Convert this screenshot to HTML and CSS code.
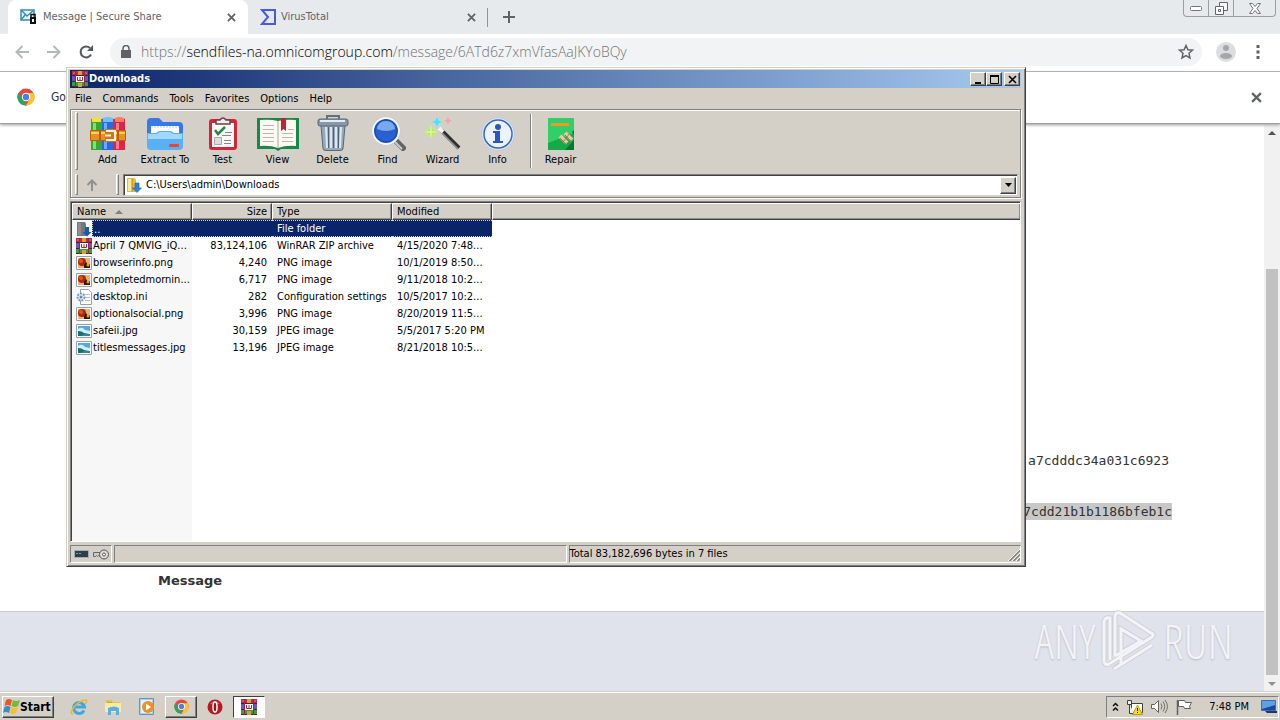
FILE: index.html
```html
<!DOCTYPE html>
<html>
	<head>
		<meta charset="UTF-8">
		<title>Downloads</title>
		<link rel="stylesheet" href="styles.css">
	</head>
	<body>
		<!-- shared icons -->
		<svg class="defs" width="0" height="0">
			<symbol id="rar" viewBox="0 0 16 16">
				<path fill="#c02848" d="M0 0h16v5H0z"/><path fill="#3868c8" d="M0 5h16v6H0z"/><path fill="#3c9c3c" d="M0 11h16v5H0z"/>
				<path fill="#5c1838" d="M0 4h16v1H0zM0 10h16v1H0zM0 15h16v1H0z"/>
				<path fill="#e84860" d="M1 1h3v2H1zM12 1h3v2h-3z"/><path fill="#7a50b8" d="M0 6h3v3H0zM13 6h3v3h-3z"/>
				<path fill="#d8a030" d="M6 0h4v4H6zM6 12h4v4H6z"/><path fill="#902848" d="M3 0h1v16H3zM12 0h1v16h-1z"/>
				<path fill="#fff" d="M4 5h8v6H4z"/><path fill="none" stroke="#a02840" d="M5.500 6v3.500h5V6M8 6v3"/>
			</symbol>
			<symbol id="png" viewBox="0 0 16 16">
				<path fill="#fff" stroke="#98a0a8" d="M.5 1.500h15v13H.5z"/><path fill="#f0b070" d="M2 3h12v10H2z"/>
				<circle cx="6" cy="7" r="4" fill="#a82810"/><circle cx="5" cy="6" r="2" fill="#e05818"/><path fill="#301808" d="M8 10l2-3 2 3 2-1v4H8z"/><circle cx="12" cy="10" r="1.500" fill="#e8a020"/>
			</symbol>
			<symbol id="jpg" viewBox="0 0 16 16">
				<path fill="#fff" stroke="#98a0a8" d="M.5 1.500h15v13H.5z"/><path fill="#58a8e0" d="M2 3h12v6H2z"/><path fill="#d0f0f8" d="M2 6q4-3 7 1l5 1v2H2z"/><path fill="#187068" d="M2 8q4 0 6 2l6 1v2H2z"/><path fill="#2888b0" d="M8 11h6v2H5z"/>
			</symbol>
			<symbol id="chrome" viewBox="0 0 18 18">
				<circle cx="9" cy="9" r="8.500" fill="#e8483c"/><path fill="#2ca45c" d="M1.600 4.700L7 13l3 4.500A8.500 8.500 0 0 1 1.600 4.700z"/>
				<path fill="#fcc820" d="M9 5h7.500A8.500 8.500 0 0 1 9 17.500l4-7z"/><circle cx="9" cy="9" r="4.200" fill="#fff"/><circle cx="9" cy="9" r="3.200" fill="#4880e8"/>
			</symbol>
			<symbol id="cross" viewBox="0 0 10 10"><path fill="none" stroke="#5f6368" stroke-width="2" d="M1 1l8 8M9 1l-8 8"/></symbol>
			<symbol id="dir" viewBox="0 0 16 16">
				<path fill="#e8b840" d="M1 1h8l1 2v12H1z"/><path fill="#fae8a0" d="M2 2h3v12H2z"/><path fill="#d49c28" d="M6 2h1v13H6z"/><path fill="#2888d8" stroke="#1860a8" stroke-width=".6" d="M9 6h4v5h2.500L11 15.500 6.500 11H9z"/>
			</symbol>
		</svg>

		<div class="desktop">
			<div class="browser">
				<div class="tabs">
					<div class="tab active">
						<svg width="18" height="16" viewBox="0 0 18 16"><path fill="#e8f6fc" stroke="#3a8cb0" stroke-width="1.500" d="M1 1h13v10H1z"/><path fill="none" stroke="#3a8cb0" stroke-width="1.500" d="M1 1l6 6 7-6M1 11l4-5"/><path fill="#111" d="M10 8h6v7h-6z"/><path fill="none" stroke="#111" stroke-width="1.500" d="M11 8V5.500h4V8"/><path fill="#fff" d="M12 10h2v3h-2z"/></svg>
						<span class="name">Message | Secure Share</span>
						<button class="plain" aria-label="Close tab"><svg width="9" height="9"><use href="#cross"/></svg></button>
					</div>
					<div class="tab">
						<svg width="16" height="16" viewBox="0 0 16 16"><path fill="none" stroke="#4a58e8" stroke-width="2" d="M2 1h13v14H2l6-7z"/></svg>
						<span class="name">VirusTotal</span>
						<button class="plain" aria-label="Close tab"><svg width="9" height="9"><use href="#cross"/></svg></button>
					</div>
					<button class="plain newTab" aria-label="New tab"><svg width="12" height="12"><path stroke="#5f6368" stroke-width="2" d="M6 0v12M0 6h12"/></svg></button>
					<div class="winBtns">
						<button aria-label="Minimize"><svg width="13" height="5"><rect x=".5" y=".5" width="11" height="4" rx="1" fill="#fff" stroke="#707580"/></svg></button>
						<button aria-label="Restore"><svg width="13" height="13"><path fill="#f4f5f7" stroke="#606570" d="M4.500.500h8v8h-8z"/><path fill="#fff" stroke="#606570" d="M.5 4.500h8v8h-8zM3.500 7.500h2v2h-2z"/></svg></button>
						<button class="wide" aria-label="Close"><svg width="12" height="11"><path fill="#fff" stroke="#707580" d="M.5.500h3l2.500 3 2.500-3h3L8 5.500l3.500 5h-3L6 7.500l-2.500 3h-3l3.500-5z"/></svg></button>
					</div>
				</div>
				<div class="bar">
					<button class="plain nav" aria-label="Back"><svg width="14" height="14"><path fill="none" stroke="#b6b8bb" stroke-width="2" d="M14 7H2M7.500 1L1.500 7l6 6"/></svg></button>
					<button class="plain nav" aria-label="Forward"><svg width="14" height="14"><path fill="none" stroke="#b6b8bb" stroke-width="2" d="M0 7h12M6.500 1l6 6-6 6"/></svg></button>
					<button class="plain nav" aria-label="Reload"><svg width="14" height="14"><path fill="none" stroke="#55585d" stroke-width="2" d="M12 9.500A5.500 5.500 0 1 1 11 3"/><path fill="#55585d" d="M14 0v6H8z"/></svg></button>
					<div class="omnibox">
						<svg width="10" height="13"><path fill="#5f6368" d="M0 5h10v8H0z"/><path fill="none" stroke="#5f6368" stroke-width="1.500" d="M2 5V3.500a3 3 0 0 1 6 0V5"/></svg>
						<div class="url">https://<b>sendfiles-na.omnicomgroup.com</b>/message/6ATd6z7xmVfasAaJKYoBQy</div>
						<button class="plain" aria-label="Bookmark"><svg width="16" height="16" viewBox="0 0 16 16"><path fill="none" stroke="#5f6368" stroke-width="1.500" d="M8 1.500l1.900 4.300 4.600.4-3.500 3.100 1 4.600L8 11.500l-4 2.400 1-4.600-3.500-3.100 4.600-.4z"/></svg></button>
					</div>
					<svg class="avatar" width="20" height="20"><circle cx="10" cy="10" r="10" fill="#dcdddf"/><circle cx="10" cy="6" r="3" fill="#a4a6a9"/><ellipse cx="10" cy="14" rx="6" ry="3" fill="#a4a6a9"/></svg>
					<button class="plain dots" aria-label="Menu"><svg width="4" height="14"><path fill="#5f6368" d="M.5 0h3v3h-3zM.5 5.500h3v3h-3zM.5 11h3v3h-3z"/></svg></button>
				</div>
				<div class="infobar">
					<svg width="18" height="18"><use href="#chrome"/></svg>
					<span>Go</span>
					<button class="plain" aria-label="Dismiss"><svg width="11" height="11"><use href="#cross"/></svg></button>
				</div>
				<div class="view">
					<div class="page">
						<div class="content">
							<p class="hash">a7cdddc34a031c6923</p>
							<p class="hash"><mark>7cdd21b1b1186bfeb1c</mark></p>
							<h2>Message</h2>
						</div>
						<div class="foot">
							<div class="anyrun">
								<span>ANY</span>
								<svg width="56" height="62" viewBox="0 0 56 62"><path fill="none" stroke="#cdd0d8" stroke-width="5" d="M9 50V8q-5-1-6 4v38q0 6 5 4l43-27q3-3-1-4L19 3q-4-1-5 3v40M14 46l26-15L20 19v35q-5 2-7 5l38-24"/><path fill="none" stroke="#f3f4f7" stroke-width="3" d="M9 50V8q-5-1-6 4v38q0 6 5 4l43-27q3-3-1-4L19 3q-4-1-5 3v40M14 46l26-15L20 19v35M13 59l38-24"/></svg>
								<span>RUN</span>
							</div>
						</div>
					</div>
					<div class="scroll">
						<button class="plain" aria-label="Scroll up"><svg width="8" height="4"><path fill="#505050" d="M0 4l4-4 4 4z"/></svg></button>
						<div class="track"><div class="thumb"></div></div>
						<button class="plain" aria-label="Scroll down"><svg width="8" height="4"><path fill="#909090" d="M0 0h8L4 4z"/></svg></button>
					</div>
				</div>
			</div>

			<div class="taskbar">
				<button class="start"><svg width="17" height="17" viewBox="0 0 17 17"><path fill="#e85820" d="M3 2q3-2 6 0L7.500 8q-3-2-6 0z"/><path fill="#78b838" d="M10 2q3 2 7 0l-2 6q-3 2-6.500 0z"/><path fill="#3888d8" d="M1.500 9q3-2 6 0L6 15q-3-2-6 0z"/><path fill="#f8c020" d="M8.500 9q3 2 6.500 0l-2 6q-3 2-6 0z"/></svg>Start</button>
				<div class="quick">
					<button aria-label="Internet Explorer"><svg width="18" height="18" viewBox="0 0 18 18"><path fill="none" stroke="#40a8e0" stroke-width="3" d="M14 12.500A5.500 5.500 0 1 1 14.500 9H4"/><path fill="none" stroke="#e8b830" stroke-width="1.500" d="M3 16q-4 0 1-7 6-7 12-7 2 1-1 4"/></svg></button>
					<button aria-label="Explorer"><svg width="17" height="16" viewBox="0 0 17 16"><path fill="#e8c050" d="M1 1h6l1 2h7v6H1z"/><path fill="#fbeaa0" d="M0 4h16v9H0z"/><path fill="#80c058" d="M2 3h5v1H2z"/><path fill="#58b0e0" d="M3 9q6-3 11 0v7h-3v-4H6v4H3z"/></svg></button>
					<button aria-label="Media Player"><svg width="17" height="17" viewBox="0 0 17 17"><path fill="#a8d0f0" stroke="#5898d0" d="M.5.500h14v16H.5z"/><path fill="#e4f2fc" d="M2 2h11v13H2z"/><circle cx="9" cy="9" r="6" fill="#f09020"/><path fill="#fff" d="M7 5.500l5 3.500-5 3.500z"/></svg></button>
					<button class="raised" aria-label="Chrome"><svg width="15" height="15"><use href="#chrome"/></svg></button>
					<button aria-label="Opera"><svg width="16" height="16" viewBox="0 0 16 16"><circle cx="8" cy="8" r="7.500" fill="#b81820"/><path fill="#e05860" d="M3 5q5-6 10 0z"/><ellipse cx="8" cy="8" rx="2" ry="5" fill="#a01018" stroke="#fff" stroke-width="1.500"/></svg></button>
					<button class="pressed" aria-label="WinRAR"><svg width="16" height="16"><use href="#rar"/></svg></button>
				</div>
				<div class="tray">
					<svg width="7" height="10"><path fill="none" stroke="#111" stroke-width="1.500" d="M1 4l2.500-2.500L6 4M1 8.500L3.500 6 6 8.500"/></svg>
					<svg width="16" height="16"><path fill="#fff" stroke="#404040" d="M4.500 4.500h11v9h-11z"/><path fill="#eee" stroke="#404040" d="M.5 1.500h4v4h-4zM2.500 5.500v9h5"/><path fill="#f8d820" stroke="#a08000" stroke-width=".7" d="M10.500 6l5 9.500h-10z"/><path stroke="#222" d="M10.500 9v3M10.500 13v1"/></svg>
					<svg width="17" height="15"><path fill="#fff" stroke="#606060" d="M.5 5.500h3l4-4v12l-4-4h-3z"/><path fill="none" stroke="#707070" d="M10 4.500q2 3 0 6M12 2.500q3.500 5 0 10M14 1q5 6.500 0 13"/></svg>
					<svg width="17" height="16"><path stroke="#606060" stroke-width="1.500" d="M1.500 1v15"/><path fill="#fff" stroke="#606060" d="M2.500 1.500h6l1 2h6l-2 4 1 2h-6l-1-2h-5z"/></svg>
					<span class="clock">7:48 PM</span>
					<svg width="16" height="13"><path fill="#1848a0" stroke="#3870b8" d="M.5.500h14v10H.5z"/><path fill="#60a0e0" d="M1 1h13v4L1 9z"/><path fill="#203860" d="M4 11h12v2H6z"/></svg>
				</div>
			</div>

			<div class="window">
				<div class="title">
					<svg width="16" height="16"><use href="#rar"/></svg>
					<b>Downloads</b>
					<button aria-label="Minimize"><svg width="9" height="9"><path d="M1 7h6v2H1z"/></svg></button>
					<button aria-label="Maximize"><svg width="9" height="9"><path fill="none" stroke="#000" d="M.5 1v7.500h8V1"/><path d="M0 0h9v2H0z"/></svg></button>
					<button class="close" aria-label="Close"><svg width="9" height="9"><path stroke="#000" stroke-width="1.600" d="M1 1l7 7M8 1L1 8"/></svg></button>
				</div>
				<div class="menu">
					<button>File</button><button>Commands</button><button>Tools</button><button>Favorites</button><button>Options</button><button>Help</button>
				</div>
				<div class="bars">
					<div class="tools">
						<i class="grip"></i>
						<button><svg width="36" height="34" viewBox="0 0 36 34">
							<path fill="#38a830" d="M1 2q6-3 11 0v31H1z"/><path fill="#2868e0" d="M12 2q6-3 12 0v31H12z"/><path fill="#d82848" d="M24 2q6-3 11 0v31H24z"/>
							<path fill="#f0e040" d="M2 1q5-2 9 0v4H2z"/><path fill="#70c0ff" d="M13 1q5-2 10 0v4H13z"/><path fill="#ff8060" d="M25 1q5-2 9 0v4h-9z"/>
							<path fill="#80e070" d="M3 6h3v26H3z"/><path fill="#70a8ff" d="M14 6h3v26h-3z"/><path fill="#ff7890" d="M26 6h3v26h-3z"/>
							<path fill="#e89020" stroke="#b86010" d="M.5 13.500h35v10H.5z"/><path fill="#ffd060" d="M1 15h34v2H1z"/><path fill="#b86010" d="M9 13h2v11H9zM27 13h2v11h-2z"/><path fill="#c87820" d="M15 12h11v13H15z"/><path fill="none" stroke="#fff0d0" stroke-width="2" d="M16 14h9v9h-9M15 18.500h6"/></svg>Add</button>
						<button class="big"><svg width="38" height="34" viewBox="0 0 38 34">
							<path fill="#3878e8" d="M1 5q0-4 4-4h8l4 4h16q4 0 4 4v12H1z"/><path fill="#fff" d="M5 9h28v9H5z"/><path stroke="#b8c8d8" stroke-dasharray="2 1" d="M5 10h28"/>
							<path fill="#58b0f8" d="M1 16h9l3-2h12l3 2h9v13q0 4-4 4H5q-4 0-4-4z"/><path fill="#a0d8ff" d="M2 17h9l3-2h10l3 2h9v5H2z"/><rect x="23" y="27" width="10" height="3" rx="1" fill="#e04838"/></svg>Extract To</button>
						<button><svg width="30" height="34" viewBox="0 0 30 34">
							<rect x="1" y="2" width="28" height="31" rx="3" fill="#d02838"/><path fill="#f8f8f8" d="M4 6h22v24H4z"/><path fill="#eee" stroke="#704048" stroke-width="1.500" d="M8 3h4q3-4 6 0h4v4H8z"/>
							<path fill="none" stroke="#288840" stroke-width="2.500" d="M7 13l3 4 7-7"/><path fill="#ddd" stroke="#aaa" d="M6.500 20.500h7v7h-7z"/><path stroke="#888" d="M17 15.500h7M14 18.500h9M16 23.500h7M16 26.500h7"/></svg>Test</button>
						<button><svg width="42" height="34" viewBox="0 0 42 34">
							<path fill="#188848" d="M0 1h42v31H24l-3 2-3-2H0z"/><path fill="#fcfaf2" d="M3 3q10-1 18 1 8-2 18-1v26q-10-1-18 2-8-3-18-2z"/><path stroke="#b0a898" d="M21 4v27"/>
							<path stroke="#b8b8b0" stroke-width="1" d="M6 8.500h11M6 12.500h11M6 16.500h11M6 20.500h11M6 24.500h11M25 16.500h11M25 20.500h11M25 24.500h11M31 12.500h6"/><path fill="#c82030" d="M24 1h5v13l-2.500-2-2.500 2z"/></svg>View</button>
						<button><svg width="32" height="36" viewBox="0 0 32 36">
							<path fill="#98a8b8" stroke="#586878" d="M4 10.500h24l-2 23q0 2-3 2H9q-3 0-3-2z"/><path fill="#dce8f0" d="M8 12h2l1 21H9zM13 12h2v21h-2zM18 12h2v21h-2zM23 12h2l-1 21h-2z"/><path stroke="#506070" d="M11.500 12v21M16.500 12v21M21.500 12v21"/>
							<rect x="1" y="4" width="30" height="7" rx="2" fill="#8898a8" stroke="#586878"/><path fill="#e4ecf4" d="M3 5h25v2H3z"/><path fill="none" stroke="#607080" stroke-width="2" d="M10 4V1h12v3"/></svg>Delete</button>
						<button><svg width="36" height="36" viewBox="0 0 36 36">
							<path stroke="#606468" stroke-width="6" stroke-linecap="round" d="M25 25l8 8"/><path stroke="#c8ccd0" stroke-width="2" d="M24 26l8 8"/>
							<circle cx="16" cy="16" r="14" fill="#1858c8" stroke="#b8c8e0"/><circle cx="16" cy="16" r="13" fill="#2860d0" stroke="#f4f8ff" stroke-width="2"/><circle cx="16" cy="16" r="11" fill="none" stroke="#1848a8"/><path fill="#78a8f0" d="M7 14q1-8 9-8t9 8q-9 4-18 0z"/></svg>Find</button>
						<button><svg width="36" height="36" viewBox="0 0 36 36">
							<path stroke="#303030" stroke-width="4" d="M16 15l18 18"/><path stroke="#989898" stroke-width="1.500" d="M15 16l18 18"/><path stroke="#f0f0f0" stroke-width="4" d="M14 13l4 4"/>
							<circle cx="6" cy="17" r="5.500" fill="#c0f070" opacity=".6"/><circle cx="6" cy="17" r="3" fill="#a8f040"/><path fill="#d8f8a0" d="M6 10l1 6 6 1-6 1-1 6-1-6-6-1 6-1z"/><circle cx="12" cy="7" r="4" fill="#90f0f0" opacity=".6"/><path fill="#50e0f0" d="M12 2l1.500 3.500L17 7l-3.500 1.500L12 12l-1.500-3.500L7 7l3.500-1.500z"/><path fill="#f8a0a8" d="M23 2l1 2.500L27 6l-3 1-1 3-1-3-3-1 3-1.500z"/></svg>Wizard</button>
						<button><svg width="34" height="34" viewBox="0 0 34 34"><circle cx="17" cy="17" r="16.500" fill="#dce4f4" stroke="#c0c8dc"/><circle cx="17" cy="17" r="14" fill="#edf2ff" stroke="#3868b8" stroke-width="1.500"/><circle cx="17" cy="10" r="3" fill="#2858c0"/><path fill="#2858c0" d="M12 14h7v10h3v2H12v-2h2v-8h-2z"/></svg>Info</button>
						<i class="sep"></i>
						<button><svg width="28" height="34" viewBox="0 0 28 34"><path fill="#18a848" d="M1 1h26v32H1z"/><path fill="#30d068" d="M1 1h26v15L1 26z"/><path fill="#f09828" d="M4 6h18v3H4z"/><path fill="#087830" d="M18 33l9-10v10zM25 15l2-2v5z"/><path stroke="#e8c8a0" stroke-width="4" d="M13 19l7 7M18 16l7 7"/><path stroke="#a08050" stroke-width="1" d="M13 21l6 6M18 18l6 6M16 25l7-9"/></svg>Repair</button>
					</div>
					<div class="address">
						<i class="grip"></i>
						<button class="plain up" aria-label="Up"><svg width="12" height="12"><path fill="none" stroke="#909090" stroke-width="2" d="M6 12V2M1.500 6L6 1.500 10.500 6"/></svg></button>
						<i class="grip"></i>
						<div class="combo">
							<svg width="16" height="16"><use href="#dir"/></svg>
							<input type="text" aria-label="Address" value="C:\Users\admin\Downloads">
							<button aria-label="Open list"><svg width="7" height="4"><path d="M0 0h7L3.500 4z"/></svg></button>
						</div>
					</div>
				</div>
				<div class="list">
					<table>
						<colgroup><col class="cName"><col class="cSize"><col class="cType"><col class="cMod"><col></colgroup>
						<thead>
							<tr><th>Name <svg width="8" height="4"><path fill="#808080" d="M0 4l4-4 4 4z"/></svg></th><th class="num">Size</th><th>Type</th><th>Modified</th><th></th></tr>
						</thead>
						<tbody>
							<tr class="sel"><td><div class="file"><svg width="16" height="16" viewBox="0 0 16 16"><path fill="#707880" d="M1 1h8l1 2v12H1z"/><path fill="#8c9090" d="M2 2h3v12H2z"/><path fill="#1858b0" d="M9 6h4v5h2.500L11 15.500 6.500 11H9z"/></svg><span>..</span></div></td><td></td><td>File folder</td><td></td><td></td></tr>
							<tr><td><div class="file"><svg width="16" height="16"><use href="#rar"/></svg><span>April 7 QMVIG_iQ...</span></div></td><td class="num">83,124,106</td><td>WinRAR ZIP archive</td><td>4/15/2020 7:48...</td><td></td></tr>
							<tr><td><div class="file"><svg width="16" height="16"><use href="#png"/></svg><span>browserinfo.png</span></div></td><td class="num">4,240</td><td>PNG image</td><td>10/1/2019 8:50...</td><td></td></tr>
							<tr><td><div class="file"><svg width="16" height="16"><use href="#png"/></svg><span>completedmornin...</span></div></td><td class="num">6,717</td><td>PNG image</td><td>9/11/2018 10:2...</td><td></td></tr>
							<tr><td><div class="file"><svg width="16" height="16" viewBox="0 0 16 16"><path fill="#fff" stroke="#98a0b0" d="M4.500.500h8l3 3v12h-11z"/><path stroke="#b0c0d8" d="M8 5.500h6M9 8.500h5M9 11.500h5"/><circle cx="5" cy="8" r="3.500" fill="#e8f0f8" stroke="#8098b0" stroke-width="2" stroke-dasharray="2 1"/><circle cx="5" cy="8" r="1.500" fill="#6888a8"/></svg><span>desktop.ini</span></div></td><td class="num">282</td><td>Configuration settings</td><td>10/5/2017 10:2...</td><td></td></tr>
							<tr><td><div class="file"><svg width="16" height="16"><use href="#png"/></svg><span>optionalsocial.png</span></div></td><td class="num">3,996</td><td>PNG image</td><td>8/20/2019 11:5...</td><td></td></tr>
							<tr><td><div class="file"><svg width="16" height="16"><use href="#jpg"/></svg><span>safeii.jpg</span></div></td><td class="num">30,159</td><td>JPEG image</td><td>5/5/2017 5:20 PM</td><td></td></tr>
							<tr><td><div class="file"><svg width="16" height="16"><use href="#jpg"/></svg><span>titlesmessages.jpg</span></div></td><td class="num">13,196</td><td>JPEG image</td><td>8/21/2018 10:5...</td><td></td></tr>
						</tbody>
					</table>
				</div>
				<div class="status">
					<div class="pane icons">
						<svg width="15" height="8"><path fill="#304048" stroke="#a0b0b8" d="M.5.500h14v7H.5z"/><path stroke="#80a0a0" stroke-dasharray="2 1" d="M2 3.500h6"/></svg>
						<svg width="16" height="11"><path fill="#ccc" stroke="#666" d="M.5 3.500h8v4h-2l-1-1-1 1-1-1-1 1h-2z"/><circle cx="11" cy="5.500" r="4.500" fill="#ddd" stroke="#555"/><circle cx="11" cy="5.500" r="1.500" fill="#fff" stroke="#555"/></svg>
					</div>
					<div class="pane"></div>
					<div class="pane">Total 83,182,696 bytes in 7 files<svg class="size" width="12" height="12"><path stroke="#fff" d="M0 12L12 0M4 12l8-8M8 12l4-4"/><path stroke="#808080" stroke-width="1.500" d="M1.500 12L12 1.500M5.500 12L12 5.500M9.500 12L12 9.500"/></svg></div>
				</div>
			</div>
		</div>
	</body>
</html>
```
FILE: styles.css
```css
*{
	margin: 0;
	padding: 0;
	box-sizing: border-box;
}
body{
	font: 11px/14px "DejaVu Sans Condensed", Tahoma, sans-serif;
	color: #000;
	overflow: hidden;
}
button,input{
	font: inherit;
	color: inherit;
	border: 0;
	background: none;
}
svg{
	display: block;
	flex: none;
}
.defs{
	position: absolute;
}
.plain{
	display: flex;
	align-items: center;
	justify-content: center;
}
.desktop{
	position: relative;
	height: 100vh;
	display: flex;
	flex-direction: column;
}

/* browser */
.browser{
	flex: 1;
	min-height: 0;
	display: flex;
	flex-direction: column;
	background: #fff;
}
.tabs{
	height: 34px;
	display: flex;
	padding-left: 8px;
	background: #e7eaed;
}
.tab{
	width: 240px;
	display: flex;
	align-items: center;
	padding: 0 11px 0 12px;
	color: #5f6368;
	border-right: 1px solid transparent;
}
.tab.active{
	background: #fff;
	border-radius: 8px 8px 0 0;
}
.tab .name{
	flex: 1;
	margin-left: 5px;
}
.tab:nth-child(2){
	border-image: linear-gradient(transparent 25%, #909498 25%, #909498 78%, transparent 78%) 1;
	border-width: 0 1px 0 0;
}
.newTab{
	width: 42px;
}
.winBtns{
	display: flex;
	height: 17px;
	margin: 0 4px 0 auto;
	border: 1px solid #9a9ea6;
	border-top: 0;
	border-radius: 0 0 4px 4px;
}
.winBtns button{
	width: 25px;
	display: flex;
	align-items: center;
	justify-content: center;
	border-right: 1px solid #9a9ea6;
}
.winBtns .wide{
	width: 41px;
	border: 0;
}
.bar{
	height: 38px;
	display: flex;
	align-items: center;
	padding: 0 10px 2px 6px;
	border-bottom: 1px solid #b4b6b8;
}
.nav{
	width: 32px;
	height: 28px;
}
.omnibox{
	flex: 1;
	height: 28px;
	margin-left: 8px;
	padding: 0 8px 0 11px;
	display: flex;
	align-items: center;
	border-radius: 14px;
	background: #f1f3f4;
}
.url{
	flex: 1;
	margin-left: 10px;
	font: 300 14px/20px "Open Sans", "Noto Sans", sans-serif;
	color: #707478;
}
.url b{
	font-weight: 300;
	color: #000;
}
.avatar{
	margin: 0 10px 0 14px;
}
.dots{
	width: 24px;
}
.infobar{
	position: relative;
	height: 52px;
	display: flex;
	align-items: center;
	padding: 0 18px 1px 17px;
	font-size: 12px;
	color: #333;
	border-bottom: 1px solid #a0a0a0;
	box-shadow: 0 1px 3px #999;
}
.infobar span{
	flex: 1;
	margin-left: 16px;
}
.view{
	flex: 1;
	min-height: 0;
	display: flex;
}
.page{
	flex: 1;
	display: flex;
	flex-direction: column;
}
.content{
	padding: 328px 92px 21px 158px;
}
.hash{
	font: 13px/17px "DejaVu Sans Mono", monospace;
	color: #333;
	text-align: right;
	margin: 0 3px 34px 0;
}
.hash mark{
	display: inline-block;
	background: #c8c8c8;
	color: #333;
}
.hash + .hash{
	margin: 0 0 52px;
}
.content h2{
	font: bold 13px/18px "DejaVu Sans", Verdana, sans-serif;
	color: #333;
}
.foot{
	flex: 1;
	background: #e0e3eb;
	border-top: 1px solid #c8ccd0;
}
.anyrun{
	display: flex;
	align-items: center;
	justify-content: flex-end;
	gap: 6px;
	margin-top: -2px;
	padding-right: 31px;
	font: 300 48px/58px "Open Sans Condensed Light", "Roboto Condensed Light", "Liberation Sans Narrow", "Roboto Condensed", sans-serif;
	color: #f3f4f7;
	text-shadow: 0 1px 2px #b4b8c0;
}
.scroll{
	width: 16px;
	display: flex;
	flex-direction: column;
	background: #f1f1f1;
}
.scroll button{
	height: 17px;
}
.track{
	flex: 1;
	display: flex;
	align-items: flex-end;
	padding: 0 2px;
}
.thumb{
	width: 100%;
	height: 76%;
	background: #c1c1c1;
}

/* taskbar */
.taskbar{
	height: 28px;
	display: flex;
	align-items: center;
	padding: 1px 1px 1px 2px;
	background: #d4d0c8;
	border-top: 1px solid #fff;
	box-shadow: 0 -1px #d4d0c8;
	z-index: 1;
}
.start,.raised{
	border: 1px solid #404040;
	border-top-color: #fff;
	border-left-color: #fff;
	box-shadow: inset -1px -1px #808080;
}
.start{
	width: 52px;
	height: 22px;
	display: flex;
	align-items: center;
	font-size: 12px;
	font-weight: bold;
}
.quick{
	display: flex;
	gap: 2px;
	margin-left: 9px;
}
.quick button{
	width: 32px;
	height: 22px;
	display: flex;
	align-items: center;
	justify-content: center;
}
.quick .pressed{
	background: #fff;
	border: 1px solid #fff;
	border-top-color: #404040;
	border-left-color: #404040;
}
.tray{
	height: 22px;
	margin-left: auto;
	display: flex;
	align-items: center;
	gap: 8px;
	padding: 0 1px 0 5px;
	border: 1px solid #fff;
	border-top-color: #808080;
	border-left-color: #808080;
}
.clock{
	margin: 0 4px 0 8px;
}

/* archive manager window */
.window{
	position: absolute;
	left: 66px;
	right: 254px;
	top: 67px;
	height: 500px;
	display: flex;
	flex-direction: column;
	padding: 2px 4px 3px 3px;
	background: #d4d0c8;
	border: 1px solid #404040;
	border-top-color: #d4d0c8;
	border-left-color: #d4d0c8;
	box-shadow: inset 1px 1px #fff, inset -1px -1px #808080;
}
.title{
	height: 18px;
	display: flex;
	align-items: center;
	padding: 0 1px 0 2px;
	color: #fff;
	background: linear-gradient(90deg, #0a246a, #a6caf0);
}
.title b{
	flex: 1;
	margin-left: 1px;
}
.title button,.combo button{
	display: flex;
	align-items: center;
	justify-content: center;
	background: #d4d0c8;
	border: 1px solid #404040;
	border-top-color: #fff;
	border-left-color: #fff;
	box-shadow: inset -1px -1px #808080;
}
.title button{
	width: 16px;
	height: 14px;
}
.title .close{
	margin-left: 2px;
}
.menu{
	height: 21px;
	display: flex;
	gap: 1px;
}
.menu button{
	padding: 0 5px;
}
.bars{
	border: 1px solid #808080;
	box-shadow: inset 1px 1px #fff, 1px 1px #fff;
}
.tools{
	height: 62px;
	display: flex;
	padding: 2px 4px;
}
.tools button{
	width: 55px;
	display: flex;
	flex-direction: column;
	align-items: center;
	justify-content: flex-end;
	padding-bottom: 3px;
	gap: 2px;
}
.tools .big{
	width: 60px;
}
.grip{
	width: 3px;
	border: 1px solid #808080;
	border-top-color: #fff;
	border-left-color: #fff;
}
.tools .grip{
	margin-right: 2px;
}
.sep{
	width: 2px;
	margin: 2px 1px 2px 5px;
	background: linear-gradient(90deg, #808080 50%, #fff 50%);
}
.address{
	height: 25px;
	display: flex;
	padding: 2px 2px 1px 4px;
}
.up{
	width: 38px;
	padding-right: 10px;
}
.address .grip{
	height: 21px;
}
.combo{
	flex: 1;
	height: 22px;
	display: flex;
	align-items: center;
	margin-left: 4px;
	padding: 1px 1px 1px 2px;
	background: #fff;
	border: 1px solid #d4d0c8;
	border-top-color: #808080;
	border-left-color: #808080;
	box-shadow: inset 1px 1px #404040;
}
.combo input{
	flex: 1;
	margin-left: 4px;
	outline: 0;
}
.combo button{
	width: 16px;
	height: 17px;
}
.list{
	flex: 1;
	min-height: 0;
	margin: 3px 0;
	border: 1px solid #fff;
	border-top-color: #808080;
	border-left-color: #808080;
	box-shadow: inset 1px 1px #404040;
	padding: 1px 0 0 1px;
	background: linear-gradient(90deg, #f7f7f7 121px, #fff 121px);
}
table{
	width: 100%;
	table-layout: fixed;
	border-collapse: separate;
	border-spacing: 0;
}
.cName,.cType{
	width: 120px;
}
.cSize{
	width: 80px;
}
.cMod{
	width: 100px;
}
th{
	height: 17px;
	padding: 0 4px;
	font-weight: normal;
	text-align: left;
	background: #d4d0c8;
	border: 1px solid #404040;
	border-top-color: #fff;
	border-left-color: #fff;
	box-shadow: inset -1px -1px #909090;
}
th svg{
	display: inline-block;
	vertical-align: middle;
	margin-left: 6px;
}
th:last-child{
	border-right: 0;
}
td{
	height: 17px;
	padding: 0 5px;
	white-space: nowrap;
}
td:first-child{
	padding: 0 0 0 4px;
}
.num{
	text-align: right;
}
.file{
	display: flex;
	align-items: center;
}
.file span{
	flex: 1;
	padding-left: 1px;
}
.sel td{
	color: #fff;
	background: #0a246a;
	border-top: 1px dotted #e0d8a0;
	border-bottom: 1px dotted #e0d8a0;
}
.sel td:first-child,.sel td:last-child{
	background: none;
	border: 0;
}
.sel .file span{
	line-height: 17px;
	background: #0a246a;
	border: 1px dotted #e0d8a0;
	border-right: 0;
	height: 17px;
}
.status{
	height: 18px;
	display: flex;
	gap: 2px;
}
.pane{
	flex: 1;
	display: flex;
	align-items: center;
	border: 1px solid #fff;
	border-top-color: #808080;
	border-left-color: #808080;
}
.icons{
	flex: none;
	width: 42px;
	gap: 4px;
	padding-left: 3px;
}
.size{
	margin: 2px 0 0 auto;
}
```
